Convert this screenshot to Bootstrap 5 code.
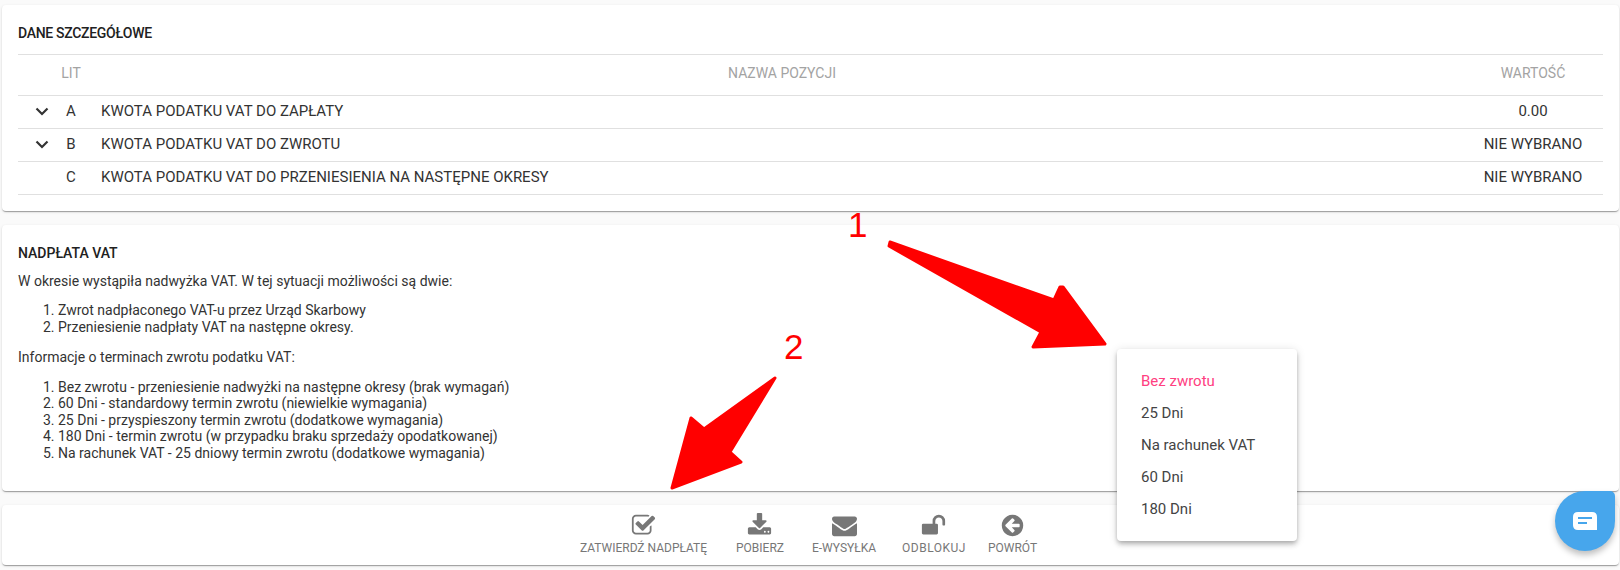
<!DOCTYPE html>
<html lang="pl">
<head>
    <meta charset="UTF-8">
    <meta name="viewport" content="width=device-width, initial-scale=1.0">
    <title>Nadpłata VAT</title>
    <link href="https://cdn.jsdelivr.net/npm/bootstrap@5.3.0/dist/css/bootstrap.min.css" rel="stylesheet">
    <style>
        html, body {
            height: 570px;
            overflow: hidden;
        }
        body {
            font-family: Roboto, "Liberation Sans", sans-serif;
            font-size: 14px;
            color: #333;
            background: #fafafa;
        }
        .page-wrap {
            padding: 5px 1px 0 2px;
            gap: 14px;
        }

        /* Cards */
        .sheet {
            border: 0;
            border-radius: 4px;
            background: #fff;
            box-shadow: 0 2px 1px -1px rgba(0,0,0,.2), 0 1px 1px 0 rgba(0,0,0,.14), 0 1px 3px 0 rgba(0,0,0,.12);
        }
        .sheet-title {
            font-size: 14px;
            font-weight: 500;
            color: #212121;
            margin: 0;
        }

        /* Details table */
        .details-sheet {
            height: 206px;
            padding: 0 16px;
        }
        .details-sheet .sheet-title {
            height: 49px;
            line-height: 56px;
            letter-spacing: -.3px;
        }
        .detail-table {
            table-layout: fixed;
            width: 100%;
            margin: 0;
            color: #333;
        }
        .detail-table th, .detail-table td {
            padding: 0;
            vertical-align: middle;
            border-color: #e0e0e0;
            box-shadow: none;
        }
        .detail-table thead tr {
            border-top: 1px solid #e0e0e0;
        }
        .detail-table th {
            height: 41px;
            font-size: 14px;
            font-weight: 400;
            color: #a3a3a3;
            padding-bottom: 3px;
        }
        .detail-table td {
            height: 33px;
            font-size: 15px;
            padding-bottom: 2px;
        }
        .col-toggle { width: 38px; }
        .col-letter { width: 30px; }
        .col-value { width: 140px; }
        .detail-table .cell-name { padding-left: 15px; }
        .chevron-ico {
            display: block;
            width: 14px;
            height: 9px;
            margin: 0 7px 0 auto;
        }

        /* Overpayment info */
        .info-sheet {
            height: 266px;
            padding: 20px 16px 0;
            line-height: 16.5px;
        }
        .info-sheet .sheet-title { margin-bottom: 11px; }
        .info-sheet p { margin: 0 0 13px; }
        .info-sheet ol {
            margin: 0 0 14px;
            padding-left: 40px;
        }

        /* Bottom toolbar */
        .action-bar {
            height: 60px;
            gap: 26px;
            padding: 8px 4px 0 0;
        }
        .action-item {
            color: #777;
            font-size: 12px;
            text-decoration: none;
            line-height: 14px;
        }
        .action-item svg {
            width: 25px;
            height: 25px;
            fill: #777;
            margin-bottom: 3px;
        }
        .action-first { margin-right: 3px; }
        .action-second { margin-right: 2px; }
        .action-wide { letter-spacing: .5px; }
        .action-last { margin-left: -4px; }

        /* Overlays */
        .vat-menu.dropdown-menu {
            position: absolute;
            left: 1117px;
            top: 349px;
            width: 180px;
            min-width: 0;
            height: 192px;
            padding: 16px 0;
            border: 0;
            border-radius: 4px;
            box-shadow: 0 2px 4px -1px rgba(0,0,0,.2), 0 4px 5px 0 rgba(0,0,0,.14), 0 1px 10px 0 rgba(0,0,0,.12);
        }
        .vat-menu .dropdown-item {
            height: 32px;
            line-height: 32px;
            padding: 0 24px;
            font-size: 15px;
            color: #444;
        }
        .vat-menu .dropdown-item.picked {
            color: #ff4081;
            background: transparent;
        }
        .chat-bubble {
            position: absolute;
            left: 1555px;
            top: 491px;
            width: 60px;
            height: 60px;
            background: #47a6ec;
            border-radius: 50% 5px 50% 50%;
            box-shadow: 0 4px 6px rgba(0,0,0,.25);
        }
        .chat-bubble svg {
            width: 24px;
            height: 18px;
        }
        .arrow-layer {
            position: absolute;
            left: 0;
            top: 0;
            width: 1620px;
            height: 570px;
            pointer-events: none;
        }
        .arrow-layer polygon {
            fill: #f00;
            stroke: #f00;
            stroke-width: 3;
            stroke-linejoin: round;
        }
        .mark-num {
            position: absolute;
            font-family: "Liberation Sans", Arial, sans-serif;
            font-size: 35px;
            line-height: 35px;
            color: #f00;
        }
    </style>
</head>
<body>
    <div class="page-wrap d-flex flex-column">
        <!-- Details -->
        <div class="sheet details-sheet">
            <h6 class="sheet-title">DANE SZCZEGÓŁOWE</h6>
            <table class="table detail-table">
                <colgroup>
                    <col class="col-toggle"><col class="col-letter"><col><col class="col-value">
                </colgroup>
                <thead>
                    <tr>
                        <th></th>
                        <th class="text-center">LIT</th>
                        <th class="text-center cell-name">NAZWA POZYCJI</th>
                        <th class="text-center">WARTOŚĆ</th>
                    </tr>
                </thead>
                <tbody>
                    <tr>
                        <td><svg class="chevron-ico" viewBox="0 0 14 9"><path d="M1.5 1.500 7 7l5.500-5.500" fill="none" stroke="#333" stroke-width="2.200"/></svg></td>
                        <td class="text-center">A</td>
                        <td class="cell-name">KWOTA PODATKU VAT DO ZAPŁATY</td>
                        <td class="text-center">0.00</td>
                    </tr>
                    <tr>
                        <td><svg class="chevron-ico" viewBox="0 0 14 9"><path d="M1.5 1.500 7 7l5.500-5.500" fill="none" stroke="#333" stroke-width="2.200"/></svg></td>
                        <td class="text-center">B</td>
                        <td class="cell-name">KWOTA PODATKU VAT DO ZWROTU</td>
                        <td class="text-center">NIE WYBRANO</td>
                    </tr>
                    <tr>
                        <td></td>
                        <td class="text-center">C</td>
                        <td class="cell-name">KWOTA PODATKU VAT DO PRZENIESIENIA NA NASTĘPNE OKRESY</td>
                        <td class="text-center">NIE WYBRANO</td>
                    </tr>
                </tbody>
            </table>
        </div>

        <!-- Overpayment info -->
        <div class="sheet info-sheet">
            <h6 class="sheet-title">NADPŁATA VAT</h6>
            <p>W okresie wystąpiła nadwyżka VAT. W tej sytuacji możliwości są dwie:</p>
            <ol>
                <li>Zwrot nadpłaconego VAT-u przez Urząd Skarbowy</li>
                <li>Przeniesienie nadpłaty VAT na następne okresy.</li>
            </ol>
            <p>Informacje o terminach zwrotu podatku VAT:</p>
            <ol>
                <li>Bez zwrotu - przeniesienie nadwyżki na następne okresy (brak wymagań)</li>
                <li>60 Dni - standardowy termin zwrotu (niewielkie wymagania)</li>
                <li>25 Dni - przyspieszony termin zwrotu (dodatkowe wymagania)</li>
                <li>180 Dni - termin zwrotu (w przypadku braku sprzedaży opodatkowanej)</li>
                <li>Na rachunek VAT - 25 dniowy termin zwrotu (dodatkowe wymagania)</li>
            </ol>
        </div>

        <!-- Toolbar -->
        <div class="sheet action-bar d-flex justify-content-center">
            <a class="action-item action-first d-flex flex-column align-items-center" href="#">
                <svg viewBox="0 0 1792 1792"><path d="M1472 930v318q0 119-84.500 203.500t-203.500 84.500h-832q-119 0-203.500-84.500t-84.500-203.500v-832q0-119 84.500-203.500t203.500-84.500h832q63 0 117 25 15 7 18 23 3 17-9 29l-49 49q-10 10-23 10-3 0-9-2-23-6-45-6h-832q-66 0-113 47t-47 113v832q0 66 47 113t113 47h832q66 0 113-47t47-113v-254q0-13 9-22l64-64q10-10 23-10 6 0 12 3 20 8 20 29zm231-489l-814 814q-24 24-57 24t-57-24l-430-430q-24-24-24-57t24-57l110-110q24-24 57-24t57 24l263 263 647-647q24-24 57-24t57 24l110 110q24 24 24 57t-24 57z"/></svg>
                <span>ZATWIERDŹ NADPŁATĘ</span>
            </a>
            <a class="action-item action-second d-flex flex-column align-items-center" href="#">
                <svg viewBox="0 0 1792 1792"><path d="M1344 1344q0-26-19-45t-45-19-45 19-19 45 19 45 45 19 45-19 19-45zm256 0q0-26-19-45t-45-19-45 19-19 45 19 45 45 19 45-19 19-45zm128-224v320q0 40-28 68t-68 28h-1472q-40 0-68-28t-28-68v-320q0-40 28-68t68-28h465l135 136q58 56 136 56t136-56l136-136h464q40 0 68 28t28 68zm-325-569q17 41-14 70l-448 448q-18 19-45 19t-45-19l-448-448q-31-29-14-70 17-39 59-39h256v-448q0-26 19-45t45-19h256q26 0 45 19t19 45v448h256q42 0 59 39z"/></svg>
                <span>POBIERZ</span>
            </a>
            <a class="action-item d-flex flex-column align-items-center" href="#">
                <svg viewBox="0 0 1792 1792"><path d="M1792 710v794q0 66-47 113t-113 47h-1472q-66 0-113-47t-47-113v-794q44 49 101 87 362 246 497 345 57 42 92.500 65.500t94.500 48 110 24.500h2q51 0 110-24.500t94.500-48 92.500-65.500q170-123 498-345 57-39 100-87zm0-294q0 79-49 151t-122 123q-376 261-468 325-10 7-42.500 30.500t-54 38-52 32.500-57.500 27-50 9h-2q-23 0-50-9t-57.500-27-52-32.500-54-38-42.500-30.500q-91-64-262-182.500t-205-142.500q-62-42-117-115.500t-55-136.500q0-78 41.500-130t118.500-52h1472q65 0 112.500 47t47.500 113z"/></svg>
                <span>E-WYSYŁKA</span>
            </a>
            <a class="action-item action-wide d-flex flex-column align-items-center" href="#">
                <svg viewBox="0 0 1792 1792"><path d="M1728 576v256q0 26-19 45t-45 19h-64q-26 0-45-19t-19-45v-256q0-106-75-181t-181-75-181 75-75 181v192h96q40 0 68 28t28 68v576q0 40-28 68t-68 28h-960q-40 0-68-28t-28-68v-576q0-40 28-68t68-28h672v-192q0-185 131.500-316.500t316.500-131.500 316.500 131.500 131.500 316.500z"/></svg>
                <span>ODBLOKUJ</span>
            </a>
            <a class="action-item action-last d-flex flex-column align-items-center" href="#">
                <svg viewBox="0 0 1792 1792"><path d="M1408 960v-128q0-26-19-45t-45-19h-502l189-189q19-19 19-45t-19-45l-91-91q-18-18-45-18t-45 18l-362 362-91 91q-18 18-18 45t18 45l91 91 362 362q18 18 45 18t45-18l91-91q18-18 18-45t-18-45l-189-189h502q26 0 45-19t19-45zm256-64q0 209-103 385.500t-279.500 279.500-385.500 103-385.500-103-279.500-279.500-103-385.500 103-385.500 279.500-279.500 385.500-103 385.500 103 279.500 279.500 103 385.500z"/></svg>
                <span>POWRÓT</span>
            </a>
        </div>
    </div>

    <!-- Open menu -->
    <ul class="dropdown-menu show vat-menu list-unstyled m-0">
        <li><a class="dropdown-item picked" href="#">Bez zwrotu</a></li>
        <li><a class="dropdown-item" href="#">25 Dni</a></li>
        <li><a class="dropdown-item" href="#">Na rachunek VAT</a></li>
        <li><a class="dropdown-item" href="#">60 Dni</a></li>
        <li><a class="dropdown-item" href="#">180 Dni</a></li>
    </ul>

    <!-- Annotations drawn on the screenshot -->
    <svg class="arrow-layer" viewBox="0 0 1620 570">
        <polygon points="890,242 1054,300 1060,287 1063,287 1105,344 1033,347 1041,332 889,246"/>
        <polygon points="775,378 730,452 741,462 672,488 691,418 704,429"/>
    </svg>
    <span class="mark-num" style="left:848px;top:207px">1</span>
    <span class="mark-num" style="left:784px;top:329px">2</span>

    <!-- Chat button -->
    <div class="chat-bubble d-flex align-items-center justify-content-center">
        <svg viewBox="0 0 24 18"><path d="M5 0h14q5 0 5 5v13H5q-5 0-5-5V5q0-5 5-5z" fill="#fff"/><path d="M5 6h14M5 11h9" stroke="#47a6ec" stroke-width="2"/></svg>
    </div>

    <script src="https://cdn.jsdelivr.net/npm/bootstrap@5.3.0/dist/js/bootstrap.bundle.min.js"></script>
</body>
</html>
